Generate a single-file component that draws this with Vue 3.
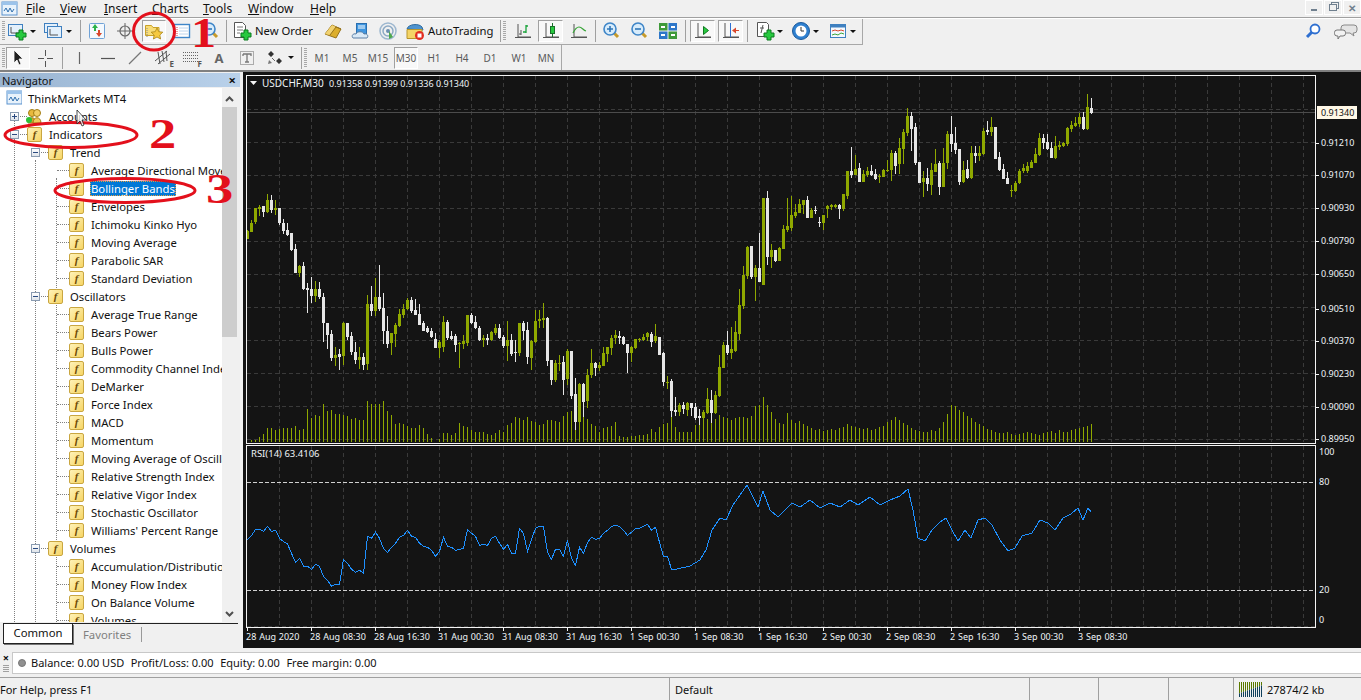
<template>
  <div class="app">
    <!-- menu bar -->
    <div class="menubar">
      <svg class="app-icon" width="18" height="16" viewBox="0 0 18 16" v-html="icons.mt4"></svg>
      <span v-for="m in menus" :key="m.t" class="menu-item" :style="{ width: m.w + 'px' }"><u>{{ m.t[0] }}</u>{{ m.t.slice(1) }}</span>
      <div class="win-btns">
        <span class="win-btn"><i class="w-min"></i></span>
        <span class="win-btn"><i class="w-rest"></i></span>
        <span class="win-btn w-close">✕</span>
      </div>
    </div>

    <!-- toolbars -->
    <div class="toolrow">
      <div class="bar">
        <template v-for="(it, i) in tools1" :key="i">
          <span v-if="it.t === 'sp'" :style="{ width: it.w + 'px' }"></span>
          <span v-else-if="it.t === 'sep'" class="sep"></span>
          <span v-else-if="it.t === 'grip'" class="grip"></span>
          <span v-else-if="it.t === 'caret'" class="caret"></span>
          <span v-else class="btn" :class="{ on: it.on, wide: it.label }" :style="{ width: it.w + 'px' }">
            <svg width="20" height="20" viewBox="0 0 20 20" v-html="icons[it.i]"></svg>
            <span v-if="it.label" class="btn-label">{{ it.label }}</span>
          </span>
        </template>
      </div>
      <div class="right-icons">
        <svg width="16" height="18" viewBox="0 0 16 18" v-html="icons.search"></svg>
        <svg width="24" height="18" viewBox="0 0 24 18" v-html="icons.chat"></svg>
      </div>
    </div>
    <div class="toolrow second">
      <div class="bar">
        <template v-for="(it, i) in tools2" :key="i">
          <span v-if="it.t === 'sp'" :style="{ width: it.w + 'px' }"></span>
          <span v-else-if="it.t === 'sep'" class="sep"></span>
          <span v-else-if="it.t === 'grip'" class="grip"></span>
          <span v-else-if="it.t === 'caret'" class="caret"></span>
          <span v-else-if="it.t === 'tf'" class="btn tf" :class="{ on: it.on }">{{ it.label }}</span>
          <span v-else-if="it.t === 'txt'" class="btn letter">{{ it.label }}</span>
          <span v-else class="btn" :class="{ on: it.on }" :style="{ width: it.w + 'px' }">
            <svg width="20" height="20" viewBox="0 0 20 20" v-html="icons[it.i]"></svg>
            <span v-if="it.mark" class="btn-mark">{{ it.mark }}</span>
          </span>
        </template>
      </div>
    </div>

    <div class="work">
      <!-- navigator -->
      <div class="nav">
        <div class="nav-title"><span>Navigator</span><b>×</b></div>
        <div class="tree-box">
          <div class="tree">
            <i class="vline v1"></i><i class="vline v2"></i><i class="vline v3"></i>
            <div v-for="(r, i) in rows" :key="i" class="row" :class="'lv' + r.lv">
              <i v-if="r.lv" class="stub"></i>
              <i v-if="r.exp" class="exp" :class="r.exp"></i>
              <svg v-if="r.icon" class="ticon" width="16" height="16" viewBox="0 0 16 16" v-html="icons[r.icon]"></svg>
              <span v-else class="ficon">f</span>
              <span class="lbl" :class="{ sel: r.sel }">{{ r.label }}</span>
            </div>
          </div>
          <div class="scroll">
            <svg width="15" height="16" viewBox="0 0 15 16"><path d="M4 10l3.500-3.500L11 10" fill="none" stroke="#505050" stroke-width="2"/></svg>
            <div class="thumb"></div>
            <svg class="down" width="15" height="16" viewBox="0 0 15 16"><path d="M4 6l3.500 3.500L11 6" fill="none" stroke="#505050" stroke-width="2"/></svg>
          </div>
        </div>
        <div class="tabs">
          <span class="tab active">Common</span>
          <span class="tab">Favorites</span>
        </div>
      </div>

      <!-- chart -->
      <svg class="chart" width="1118" height="576" viewBox="243 72 1118 576">
        <g stroke="#3a3a3a" stroke-dasharray="4 3" shape-rendering="crispEdges">
          <line v-for="x in gridX" :key="'a' + x" :x1="x + 0.5" y1="76" :x2="x + 0.5" y2="442" />
          <line v-for="x in gridX" :key="'b' + x" :x1="x + 0.5" y1="446" :x2="x + 0.5" y2="626" />
          <line v-for="y in gridY" :key="'c' + y" x1="247" :y1="y + 0.5" x2="1315" :y2="y + 0.5" />
          <line x1="247" y1="626.5" x2="1315" y2="626.5" />
        </g>
        <line x1="247" y1="112.5" x2="1315" y2="112.5" stroke="#4c4c4c" shape-rendering="crispEdges" />
        <g shape-rendering="crispEdges">
          <rect v-for="v in volumes" :key="'v' + v.x" :x="v.x" :y="442 - v.h" width="1" :height="v.h" fill="#8fa800" />
          <g v-for="c in candles" :key="c.x" :fill="c.up ? '#8fa800' : '#e6e6e6'">
            <rect :x="c.x" :y="c.wt" width="1" :height="c.wb - c.wt" />
            <rect :x="c.x - 1" :y="c.bt" width="3" :height="Math.max(c.bb - c.bt, 1)" />
          </g>
        </g>
        <g stroke="#d0d0d0" stroke-dasharray="4 2" shape-rendering="crispEdges">
          <line x1="247" y1="482.5" x2="1315" y2="482.5" />
          <line x1="247" y1="590.5" x2="1315" y2="590.5" />
        </g>
        <polyline :points="rsiPoints" fill="none" stroke="#1e90ff" stroke-width="1" shape-rendering="crispEdges" />
        <!-- frames -->
        <g fill="none" stroke="#f4f4f4" shape-rendering="crispEdges">
          <path d="M246.500 75.500H1315.500V443.500H246.500Z" />
          <path d="M246.500 445.500H1315.500V627.500H246.500Z" />
        </g>
        <g stroke="#f4f4f4" shape-rendering="crispEdges">
          <line v-for="p in prices" :key="'t' + p.t" x1="1315" :y1="p.y + 0.5" x2="1319" :y2="p.y + 0.5" />
          <line v-for="t in times" :key="'u' + t.x" :x1="t.x + 1.5" y1="627" :x2="t.x + 1.5" y2="631" />
        </g>
        <polygon points="250,81 257,81 253.500,85" fill="#f4f4f4" />
        <text class="ctext title" x="262" y="87">USDCHF,M30</text>
        <text class="ctext" x="329" y="87">0.91358 0.91399 0.91336 0.91340</text>
        <text class="ctext rsi" x="251" y="457">RSI(14) 63.4106</text>
        <text v-for="p in prices" :key="p.t" class="ctext" x="1321" :y="p.y + 3">{{ p.t }}</text>
        <rect x="1317" y="106" width="40" height="13" fill="#fff8e7" />
        <text class="ctext dark" x="1321" y="116">0.91340</text>
        <text v-for="l in rsiLabels" :key="l.t" class="ctext" x="1319" :y="l.y + 3">{{ l.t }}</text>
        <text v-for="t in times" :key="t.t" class="ctext tm" :x="t.x" y="640">{{ t.t }}</text>
      </svg>
    </div>

    <!-- account line -->
    <div class="account">
      <div class="acc-side"><b>×</b><i></i></div>
      <div class="acc-box">
        <i class="dot"></i>
        <span>Balance: 0.00 USD</span><span>Profit/Loss: 0.00</span><span>Equity: 0.00</span><span>Free margin: 0.00</span>
      </div>
    </div>

    <!-- status bar -->
    <div class="status">
      <span class="st help">For Help, press F1</span>
      <span class="st def">Default</span>
      <span class="st s1"></span>
      <span class="st s2"></span>
      <span class="st s3"></span>
      <span class="st conn">
        <svg width="24" height="15" viewBox="0 0 24 15">
          <g v-for="n in 12" :key="n">
            <rect :x="(n - 1) * 2" y="0" width="1" :height="15 - n * 0.7 - 3" fill="#5b7a00" />
            <rect :x="(n - 1) * 2" :y="15 - n * 0.7 - 3" width="1" :height="n * 0.7 + 3" fill="#10405c" />
          </g>
        </svg>
        27874/2 kb
      </span>
    </div>

    <!-- red marks drawn on top of the screenshot -->
    <svg class="marks" width="1361" height="700" viewBox="0 0 1361 700">
      <g fill="none" stroke="#e3101c" stroke-width="3">
        <ellipse cx="154" cy="31.500" rx="20.500" ry="18.500" />
        <ellipse cx="71" cy="135" rx="66" ry="12.500" />
        <ellipse cx="125" cy="190.500" rx="70" ry="12" />
      </g>
      <g class="num">
        <text transform="translate(191 47) scale(1.2 1)">1</text>
        <text transform="translate(149 148) scale(1.3 1)">2</text>
        <text transform="translate(206 203) scale(1.3 1)">3</text>
      </g>
      <path d="M77 110v14l3-3 2 5 2-1-2-5h4z" fill="#fff" fill-opacity=".75" stroke="#222" stroke-width=".8" />
    </svg>
  </div>
</template>

<script setup>
const menus = [
  { t: 'File', w: 34 }, { t: 'View', w: 44 }, { t: 'Insert', w: 48 }, { t: 'Charts', w: 51 },
  { t: 'Tools', w: 45 }, { t: 'Window', w: 62 }, { t: 'Help', w: 40 }
]

const plus = (x, y) => `<path d="M${x + 3} ${y}h4v3h3v4h-3v3h-4v-3h-3v-4h3z" fill="#27c93f" stroke="#0b7a1e" stroke-width="1"/>`
const axes = (x, y, w, h) => `<path d="M${x} ${y}v${h}h${w}" fill="none" stroke="#555" stroke-width="1"/>`
const lens = (sign) => `<path d="M11 11l5 5" stroke="#c69a2a" stroke-width="3"/><circle cx="8" cy="8" r="6" fill="#d8ecfb" stroke="#3f86c8" stroke-width="1.6"/><path d="M5 8h6${sign ? 'M8 5v6' : ''}" stroke="#2f76b8" stroke-width="1.6"/>`

const icons = {
  mt4: '<rect x="1" y="1" width="15" height="13" fill="#e8f2fb" stroke="#5b93cf"/><rect x="1" y="1" width="15" height="3" fill="#9cc3ea"/><path d="M3 10l2-3 2 4 2-4 2 4 2-3" fill="none" stroke="#2f6fae"/>',
  newchart: `<rect x="1.5" y="3.5" width="14" height="11" fill="#e4f0fb" stroke="#3f80c0"/>${axes(4, 6, 8, 6)}${plus(9, 9)}`,
  profile: `<rect x="1.5" y="2.5" width="13" height="9" fill="#e4f0fb" stroke="#3f80c0"/><rect x="4.5" y="5.5" width="14" height="11" fill="#e4f0fb" stroke="#3f80c0"/>${axes(7, 8, 8, 6)}`,
  market: '<rect x="2.5" y="2.5" width="15" height="15" rx="1" fill="#f4f9fe" stroke="#70a2d6"/><path d="M8 3l3 4H9v3H7V7H5z" fill="#2bb34a"/><path d="M12 16l-3-4h2V9h2v3h2z" fill="#d9472b"/>',
  cross: '<circle cx="10" cy="10" r="5" fill="none" stroke="#666" stroke-width="1.2"/><path d="M10 2v16M2 10h16" stroke="#666"/>',
  plusgap: '<path d="M10.500 2v6M10.500 13v6M3 10.500h6M12 10.500h6" stroke="#555"/>',
  folderstar: '<path d="M1.5 4.5h6l1.5 2h6v8h-13.500z" fill="#f8dd78" stroke="#c9a227"/><path d="M13 7l1.800 3.700 4 .5-3 2.800.8 4-3.600-2-3.600 2 .8-4-3-2.800 4-.5z" fill="#f6c93f" stroke="#a98414" stroke-width=".8"/><path d="M3 7v9" stroke="#888" stroke-dasharray="1 1"/>',
  terminal: '<rect x="2.500" y="3.500" width="15" height="13" fill="#fff" stroke="#3f86c8" stroke-width="1.400"/><path d="M5 6v9" stroke="#d83a3a" stroke-dasharray="1 1"/><path d="M7 7h9M7 10h9M7 13h9" stroke="#bcd4ec"/>',
  tester: lens(false),
  neworder: `<path d="M2.500 1.500h8l3 3v12h-11z" fill="#fff" stroke="#555"/><path d="M5 6h6M5 9h6M5 12h3" stroke="#777"/>${plus(9, 9)}`,
  gold: '<path d="M2 13l7-9 9 4-5 9z" fill="#dcae2c" stroke="#96721a"/><path d="M2 13l7-9 4 2-6 8z" fill="#f1d271"/><path d="M7 14l6-8 5 2" fill="none" stroke="#96721a"/>',
  cloud: '<rect x="6.500" y="2.500" width="10" height="10" fill="#3f96e0" stroke="#2a6fb0"/><path d="M8 5h7M8 7h7" stroke="#fff"/><path d="M3 17c-2-2 0-5 3-4 1-3 7-3 8 0 3-1 5 2 3 4z" fill="#d9e9f7" stroke="#5a7fa5"/>',
  signal: '<circle cx="10" cy="10" r="8" fill="none" stroke="#9db7cf" stroke-width="1.500"/><circle cx="10" cy="10" r="5" fill="none" stroke="#8ba9c4" stroke-width="1.500"/><circle cx="10" cy="10" r="2" fill="#6c8fb0"/><path d="M11 10v8l4-2z" fill="#4da84d"/>',
  auto: '<path d="M2 8c1-5 12-6 15-2l1 3z" fill="#4e93cf" stroke="#2f6b9e"/><path d="M2 8.500h15v9h-15z" fill="#f4d466" stroke="#b8952a"/><circle cx="14.500" cy="14.500" r="4.500" fill="#e22b1f"/><rect x="12.500" y="12.500" width="4" height="4" fill="#fff"/>',
  bar: `${axes(5, 3, 13, 13)}<path d="M2 16.500h16M8 9v5M8 13h-2" stroke="#555"/><path d="M13 4v8M13 5h2M13 11h-3" stroke="#19a33a" stroke-width="1.300" fill="none"/>`,
  candle: `${axes(5, 2, 13, 14)}<path d="M2 16.500h16" stroke="#555"/><rect x="9.500" y="5.500" width="4" height="7" fill="#27c93f" stroke="#1a6f2a"/><path d="M11.500 2v3M11.500 13v3" stroke="#1a6f2a"/>`,
  line: `${axes(5, 3, 13, 13)}<path d="M2 16.500h16" stroke="#555"/><path d="M4 12c2-4 4-6 6-6 3 0 4 3 7 4" fill="none" stroke="#3aa53a" stroke-width="1.200"/>`,
  zoomin: lens(true),
  zoomout: lens(false),
  tile: '<rect x="1" y="2" width="8.500" height="7.500" fill="#3f9a3a"/><rect x="10.500" y="2" width="8.500" height="7.500" fill="#2e77c9"/><rect x="1" y="10.500" width="8.500" height="7.500" fill="#2e77c9"/><rect x="10.500" y="10.500" width="8.500" height="7.500" fill="#3f9a3a"/><path d="M3 6h4M13 6h4M3 14h4M13 14h4" stroke="#fff" stroke-width="2"/>',
  autoscroll: `${axes(5, 2, 13, 14)}<path d="M2 16.500h16" stroke="#555"/><path d="M10.500 5.500l5 4-5 4z" fill="#27c93f" stroke="#107a20"/>`,
  shift: `${axes(4, 2, 14, 14)}<path d="M2 16.500h16" stroke="#555"/><path d="M9.500 2v14" stroke="#2f6fd0"/><path d="M11 9.500l4-3v6z" fill="#d9472b"/><path d="M13 9.500h5" stroke="#d9472b"/>`,
  indicators: `<path d="M2.500 1.500h9l2 2v12h-11z" fill="#fff" stroke="#555"/><path d="M6 12l2-8M5 7h4" stroke="#555"/>${plus(9, 9)}`,
  clock: '<circle cx="10" cy="10" r="8.500" fill="#2f80d0" stroke="#1d5a9b"/><circle cx="10" cy="10" r="5.500" fill="#fff"/><path d="M10 6v4h3" fill="none" stroke="#333"/>',
  template: '<rect x="2.500" y="3.500" width="15" height="13" fill="#f4f9fe" stroke="#3f80c0"/><rect x="2.500" y="3.500" width="15" height="3" fill="#3f80c0"/><path d="M4 10l3-1 3 1 3-1 3 1" fill="none" stroke="#d9472b"/><path d="M4 14l3-1 3 1 3-2 3 1" fill="none" stroke="#3aa53a"/>',
  search: '<path d="M7 10l-5 5" stroke="#2e6fd0" stroke-width="3"/><circle cx="10" cy="7" r="4.500" fill="#fff" stroke="#2e6fd0" stroke-width="1.800"/>',
  chat: '<path d="M10 3h10a3 3 0 0 1 3 3v2a3 3 0 0 1-3 3h-1l1 3-4-3h-6a3 3 0 0 1-3-3V6a3 3 0 0 1 3-3z" fill="#e4e4e4" stroke="#888"/><path d="M3 8h6a2.500 2.500 0 0 1 2.500 2.500v1a2.500 2.500 0 0 1-2.500 2.500H6l-2 3v-3H3A2.500 2.500 0 0 1 .5 11.500v-1A2.500 2.500 0 0 1 3 8z" fill="#f2f2f2" stroke="#777"/>',
  pointer: '<path d="M6 2v13l3-3 2 5 2-1-2-5h4z" fill="#222" stroke="#fff" stroke-width=".8"/>',
  vl: '<path d="M10.500 4v12" stroke="#666" stroke-width="1.200"/>',
  hl: '<path d="M3 10.500h14" stroke="#555" stroke-width="1.200"/>',
  tl: '<path d="M4 16L16 4" stroke="#777" stroke-width="1.200"/>',
  channel: '<path d="M2 13L14 3M5 16L17 6M5 4l2 12M9 3l2 11M13 3l1 10" stroke="#555" fill="none"/>',
  fib: '<path d="M2 4.500h15M2 7.500h15M2 10.500h15M2 13.500h15" stroke="#666" stroke-dasharray="1 1"/>',
  textbox: '<rect x="3.500" y="3.500" width="13" height="13" fill="none" stroke="#666" stroke-dasharray="1 1"/><path d="M6 6h8v2M10 6v8M8 14h4M6 8V6" stroke="#777" stroke-width="1.300" fill="none"/>',
  arrows: '<path d="M6 3l3 3-3 3-3-3zM14 10l3 3-3 3-3-3z" fill="#333"/><path d="M7 10l3 3" stroke="#666"/><path d="M4 12l3 3-4 1z" fill="#777"/>',
  acct: '<circle cx="6" cy="5" r="3.500" fill="#e8b93c" stroke="#a27d14"/><circle cx="11" cy="5" r="3.500" fill="#f2cf66" stroke="#a27d14"/><path d="M2 15c0-7 8-7 8 0z" fill="#d8a62e" stroke="#a27d14"/><path d="M7 15c0-7 8-7 8 0z" fill="#efc95c" stroke="#a27d14"/><circle cx="3" cy="12" r="3" fill="#2bc038"/>'
}

const sp = (w) => ({ t: 'sp', w })
const sep = { t: 'sep' }
const grip = { t: 'grip' }
const caret = { t: 'caret' }
const b = (i, w = 22, on = false) => ({ t: 'btn', i, w, on })

const tools1 = [
  grip, b('newchart'), caret, sp(4), b('profile'), caret, sp(6), sep, sp(5),
  b('market'), sp(6), b('cross'), sp(6), b('folderstar', 24, true), sp(5), b('terminal'), sp(7), b('tester'), sp(4), sep, sp(5),
  { t: 'btn', i: 'neworder', w: 83, label: 'New Order' }, sp(7), b('gold'), sp(5), b('cloud'), sp(6), b('signal'), sp(6),
  { t: 'btn', i: 'auto', w: 95, label: 'AutoTrading' }, sep, grip, sp(5),
  b('bar'), sp(4), b('candle', 25, true), sp(5), b('line'), sp(5), sep, sp(5), b('zoomin'), sp(6), b('zoomout'), sp(6), b('tile'), sp(6), sep, sp(4),
  b('autoscroll', 25, true), sp(3), b('shift', 25, true), sp(4), sep, sp(7), b('indicators', 20), caret, sp(6), b('clock', 20), caret, sp(7), b('template', 20), caret, sp(4)
]

const tf = (label, on = false) => ({ t: 'tf', label, on })
const tools2 = [
  grip, b('pointer', 24, true), sp(4), b('plusgap'), sp(6), sep, sp(5), b('vl'), sp(7), b('hl'), sp(5), b('tl'), sp(6),
  { t: 'btn', i: 'channel', w: 22, mark: 'E' }, sp(6), { t: 'btn', i: 'fib', w: 22, mark: 'F' }, sp(6),
  { t: 'txt', label: 'A' }, sp(6), b('textbox'), sp(6), b('arrows'), caret, sp(5), sep, grip, sp(2),
  tf('M1'), sp(4), tf('M5'), sp(4), tf('M15'), sp(4), tf('M30', true), sp(4), tf('H1'), sp(4), tf('H4'), sp(4), tf('D1'), sp(5), tf('W1'), sp(3), tf('MN'), sp(3)
]

const child = (label, sel) => ({ label, lv: 3, sel })
const rows = [
  { label: 'ThinkMarkets MT4', lv: 0, icon: 'mt4' },
  { label: 'Accounts', lv: 1, exp: 'closed', icon: 'acct' },
  { label: 'Indicators', lv: 1, exp: 'open' },
  { label: 'Trend', lv: 2, exp: 'open' },
  child('Average Directional Movement Index'), child('Bollinger Bands', true), child('Envelopes'), child('Ichimoku Kinko Hyo'),
  child('Moving Average'), child('Parabolic SAR'), child('Standard Deviation'),
  { label: 'Oscillators', lv: 2, exp: 'open' },
  child('Average True Range'), child('Bears Power'), child('Bulls Power'), child('Commodity Channel Index'), child('DeMarker'),
  child('Force Index'), child('MACD'), child('Momentum'), child('Moving Average of Oscillator'), child('Relative Strength Index'),
  child('Relative Vigor Index'), child('Stochastic Oscillator'), child("Williams' Percent Range"),
  { label: 'Volumes', lv: 2, exp: 'open' },
  child('Accumulation/Distribution'), child('Money Flow Index'), child('On Balance Volume'), child('Volumes')
]

// candles read off the picture: colour, body top, body bottom, wick top, wick bottom (in 3x pixels)
const seg1 = 'g122 147 120 147,g99 125 90 127,g54 97 54 102,g50 56 45 78,w48 66 48 81,g30 66 12 68,w30 60 15 68,g54 60 30 75,w54 99 54 104,w99 122 88 132,w120 135 100 137,w129 180 129 183,w177 248 163 248,g228 248 225 261,w228 297 217 300,w294 300 279 369,w297 318 262 340,g297 318 274 335,w297 321 277 327,w321 399 309 456,w399 435 399 477,w432 504 420 513,g495 504 472 528,w492 501 477 540,g399 498 396 525,w399 441 399 450,w438 486 427 495,w486 510 456 522,g501 510 472 538,w501 525 490 540,g342 522 315 540,w342 363 288 378,g321 363 264 378,w321 357 225 363,w354 423 309 462,w423 462 378 474,g429 459 429 495,g405 432 399 471,g372 408 358 411,g357 375 342 384,g330 357 324 360,w330 363 321 369,w360 375 327 375,w372 405 342 405,w399 423 393 423,w414 426 408 429,w423 441 414 444,w447 474 429 474,g456 474 450 504,g396 471 378 486,w396 444 390 450,w438 447 423 450,w438 465 432 486,g459 462 456 534,g453 462 435 477,g375 459 375 468,w375 399 369 402,w396 414 378 417,w414 450 408 453,g444 450 435 471,w444 450 432 465,g426 450 423 453,g414 429 402 435,w414 444 402 447,w441 468 435 474,g450 468 393 513,w450 492 432 498,w486 489 450 516,g399 489 399 498,w399 423 393 450,w420 501 396 522,g453 504 450 540,g393 456 360 459,g387 393 360 414,g384 390 339 414'
const seg2 = 'w414 543 411 558,w540 600 540 615,g549 600 540 606,g549 552 525 573,w546 600 528 645,g513 597 507 615,w513 648 513 657,w642 726 594 750,g612 726 609 750,w612 666 609 711,g585 663 567 684,g549 585 507 594,w549 564 546 588,g555 564 546 573,g519 558 501 558,g501 522 501 546,g474 504 465 525,g465 474 450 492,w468 474 453 492,w471 492 468 495,w492 519 492 579,g501 519 498 546,g477 504 477 507,g477 480 474 486,g471 480 462 483,g459 471 456 483,w462 486 456 501,g468 483 432 489,w471 525 471 525,w519 606 516 618,g606 609 588 627,w603 693 597 711,w690 696 651 708,g675 696 669 708,w675 687 666 702,g669 690 666 708,w669 684 669 708,w681 714 669 720,w708 714 687 735,g696 714 690 750,g657 699 624 702,w660 699 630 729,g645 699 633 702,g561 648 525 651,g495 564 486 564,w495 519 453 525,g507 519 441 537,g456 513 423 516,g375 462 327 480,g285 378 258 387,g201 288 198 297,w198 291 198 297,g264 291 255 363,w264 306 159 306,g54 315 54 315,w54 231 33 255,g210 231 192 264,w210 243 210 246,g204 243 201 243,g147 207 135 207,g138 150 54 156,g105 144 48 153,g96 108 72 114,g72 99 57 99,g60 75 60 102,w60 114 48 114,g90 114 84 114,w90 93 78 102,w126 129 111 141,g105 129 105 150,g78 87 75 114,g75 81 72 90,g75 81 72 84,w75 87 72 117,g42 87 42 93'
const seg3 = 'g243 318 243 327,w243 255 171 264,g237 255 195 255,w234 276 219 276,g252 276 240 276,g243 255 231 261,w243 255 225 258,w252 267 237 270,g258 261 252 279,g240 261 237 261,g240 243 209 246,g189 240 180 273,w189 228 183 252,g174 222 144 252,g126 177 117 222,g78 129 54 138,w78 117 66 183,w111 219 99 225,w216 279 216 279,g264 276 243 321,w264 282 234 303,g240 285 219 315,g222 246 177 246,w219 291 213 315,g219 291 174 291,g132 219 123 237,w132 162 78 186,w159 180 111 192,w177 276 177 285,g240 276 213 279,w237 264 210 267,g189 264 168 267,w189 198 168 219,g189 198 168 213,g123 192 114 195,w120 126 93 135,g111 126 81 138,w111 207 111 207,w201 240 186 243,w237 267 222 267,w264 282 246 282,g300 303 285 321,g279 303 273 306,g243 279 237 282,g234 243 222 249,g228 243 216 249,g216 234 210 234,g192 219 174 219,g144 195 129 198,w144 159 132 177,w156 177 132 180,w174 204 156 204,g168 204 138 207,g165 171 153 180,g159 168 156 171,g114 162 111 168,g105 117 93 126,g99 108 81 111,g81 102 69 111,w81 117 66 120,g51 117 12 120,w54 69 24 72'

const candles = []
const readSeg = (str, base) => {
  str.split(',').forEach((s) => {
    const [bt, bb, wt, wb] = s.slice(1).split(' ').map((n) => base + Math.round(Number(n) / 3))
    candles.push({ x: 247 + candles.length * 4, up: s[0] === 'g', bt, bb, wt, wb })
  })
}
readSeg(seg1, 190)
readSeg(seg2, 180)
readSeg(seg3, 90)

const volTops = [186, 181, 180, 171, 162, 144, 144, 150, 147, 144, 144, 144, 138, 150, 147, 87, 114, 105, 108, 72, 93, 90, 102, 102, 105, 108, 117, 114, 120, 120, 63, 72, 72, 72, 63, 93, 105, 132, 129, 132, 138, 144, 144, 135, 144, 162, 174, 186, 177, 159, 159, 165, 159, 129, 138, 141, 150, 156, 156, 156, 162, 165, 159, 150, 156, 135, 129, 111, 114, 120, 111, 123, 126, 135, 132]
const volRest = [22, 22, 21, 20, 26, 30, 31, 28, 25, 25, 23, 18, 16, 10, 14, 15, 16, 20, 6, 5, 5, 6, 6, 7, 7, 8, 13, 10, 15, 18, 19, 25, 15, 10, 10, 10, 10, 17, 17, 22, 23, 24, 23, 27, 25, 24, 22, 24, 25, 25, 24, 26, 36, 37, 45, 37, 30, 23, 19, 18, 29, 22, 19, 21, 18,
  16, 14, 12, 13, 11, 12, 13, 12, 14, 15, 18, 16, 15, 14, 13, 14, 12, 13, 15, 16, 20, 22, 25, 22, 19, 17, 14, 12, 11, 10, 10, 12, 11, 14, 20, 28, 37, 36, 32, 30, 26, 24, 20, 18, 16, 13, 12, 10, 9, 9, 10, 8, 7, 8, 9, 10, 9, 8, 7, 9, 10, 11, 9, 12, 10, 10, 12, 13, 14, 15, 16, 18, 20, 21, 22]
const volumes = [...volTops.map((t) => Math.round((186 - t) / 3)), ...volRest].slice(0, 212).map((h, i) => ({ x: 247 + i * 4, h }))

// RSI: first part per bar (3x pixels), then the rest as a hand-read polyline
const rsiA = [209, 197, 178, 178, 184, 169, 184, 181, 205, 215, 222, 250, 277, 265, 289, 289, 298, 283, 289, 319, 331, 349, 343, 343, 268, 280, 298, 307, 301, 310, 199, 205, 187, 205, 235, 247, 232, 220, 202, 196, 181, 199, 202, 220, 229, 232, 241, 259, 244, 202, 229, 232, 241, 238, 235, 178, 190, 199, 226, 223, 226, 205, 199, 220, 238, 223, 250, 250, 175, 190, 244, 208, 175, 169, 169, 247, 268, 238, 238, 259, 211, 265, 286, 232, 250, 217, 202, 208, 205, 190, 181, 169, 166, 169, 181, 196, 187, 175, 175, 169, 163, 181, 172, 217, 259, 259, 298, 298]
const rsiB = '690,566 700,560 706,550 712,530 720,518 726,520 733,505 740,495 747,485 752,495 758,507 763,491 770,510 778,517 785,510 792,503 800,507 810,500 820,508 830,503 840,507 850,500 858,505 870,497 880,505 890,500 900,496 908,489 913,510 918,538 925,541 932,530 940,522 946,518 952,530 958,541 965,530 971,538 978,520 985,518 992,525 1000,540 1008,551 1015,548 1022,536 1032,533 1040,520 1048,523 1055,530 1063,518 1071,514 1078,508 1083,520 1088,508 1091,512'
const rsiPoints = rsiA.map((v, i) => `${247.5 + i * 4},${470 + v / 3}`).join(' ') + ' ' + rsiB

const gridX = Array.from({ length: 33 }, (_, i) => 279 + i * 32)
const gridY = [109, 142, 175, 208, 241, 274, 307, 340, 373, 406, 439]
const prices = [
  { t: '0.91210', y: 143 }, { t: '0.91070', y: 175 }, { t: '0.90930', y: 208 }, { t: '0.90790', y: 241 }, { t: '0.90650', y: 274 },
  { t: '0.90510', y: 309 }, { t: '0.90370', y: 341 }, { t: '0.90230', y: 374 }, { t: '0.90090', y: 407 }, { t: '0.89950', y: 439 }
]
const rsiLabels = [{ t: '100', y: 452 }, { t: '80', y: 482 }, { t: '20', y: 590 }, { t: '0', y: 620 }]
const timeText = ['28 Aug 2020', '28 Aug 08:30', '28 Aug 16:30', '31 Aug 00:30', '31 Aug 08:30', '31 Aug 16:30', '1 Sep 00:30', '1 Sep 08:30', '1 Sep 16:30', '2 Sep 00:30', '2 Sep 08:30', '2 Sep 16:30', '3 Sep 00:30', '3 Sep 08:30']
const times = timeText.map((t, i) => ({ t, x: 246 + i * 64 }))
</script>

<style>
html, body { margin: 0; padding: 0; overflow: hidden; background: #f0f0f0; }
</style>

<style scoped>
.app {
  position: relative;
  width: 1361px;
  height: 700px;
  overflow: hidden;
  display: flex;
  flex-direction: column;
  background: #f0f0f0;
  font-family: "Noto Sans", "Liberation Sans", sans-serif;
  font-size: 11px;
  color: #111;
}

.menubar {
  height: 17px;
  flex: none;
  display: flex;
  align-items: center;
  border-bottom: 1px solid #a0a0a0;
  box-shadow: 0 1px 0 #fff;
  position: relative;
  font-size: 12px;
}
.app-icon { margin: 0 7px 0 1px; }
.menu-item { flex: none; }
.win-btns { margin-left: auto; display: flex; gap: 1px; align-self: flex-start; }
.win-btn {
  width: 18px;
  height: 15px;
  background: #f0f0f0;
  border: 1px solid #fff;
  box-sizing: border-box;
  display: flex;
  align-items: center;
  justify-content: center;
  color: #70808f;
  font-size: 10px;
  font-weight: 700;
}
.w-min { width: 6px; height: 2px; background: #70808f; margin-top: 5px; }
.w-rest { width: 6px; height: 5px; border: 1px solid #70808f; box-shadow: 2px -2px 0 -1px #f0f0f0, 2px -2px 0 0 #70808f; }

.toolrow { height: 27px; flex: none; display: flex; }
.bar {
  display: flex;
  align-items: center;
  height: 26px;
  border-bottom: 1px solid #a8a8a8;
  border-right: 1px solid #a8a8a8;
}
.second { border-bottom: 2px solid #808080; box-sizing: content-box; height: 25px; }
.second .bar { border-bottom: none; height: 25px; }
.right-icons { margin-left: auto; display: flex; align-items: center; height: 26px; gap: 13px; padding-right: 3px; }
.sep { width: 1px; height: 22px; background: #a0a0a0; flex: none; }
.grip {
  width: 6px;
  height: 20px;
  flex: none;
  background: repeating-linear-gradient(#a8a8a8 0 1px, transparent 1px 2px) 2px 0 / 3px 100% no-repeat;
}
.caret { width: 10px; flex: none; display: flex; justify-content: center; }
.caret::after {
  content: "";
  border-left: 3px solid transparent;
  border-right: 3px solid transparent;
  border-top: 3px solid #111;
}
.btn {
  flex: none;
  height: 22px;
  box-sizing: border-box;
  display: flex;
  align-items: center;
  justify-content: center;
  position: relative;
}
.btn.wide { justify-content: flex-start; gap: 3px; }
.btn-label { font-size: 11.3px; white-space: nowrap; margin-top: -2px; }
.btn.on {
  background: #f8f8f8;
  border: 1px solid #fff;
  border-top-color: #a0a0a0;
  border-left-color: #a0a0a0;
}
.btn-mark { position: absolute; right: 0; bottom: 0; font-size: 8px; font-weight: 700; color: #555; }
.tf { width: 24px; font-size: 10px; color: #5a5a5a; }
.letter { width: 22px; font-size: 13px; font-weight: 700; color: #666; }

.work { height: 576px; flex: none; display: flex; }
.nav { width: 243px; flex: none; display: flex; flex-direction: column; }
.nav-title {
  height: 14px;
  margin: 1px 3px 1px 0;
  padding-left: 2px;
  background: linear-gradient(90deg, #99b4d1, #b9d1ea);
  display: flex;
  align-items: center;
  justify-content: space-between;
}
.nav-title b { padding-right: 4px; font-size: 13px; line-height: 12px; }
.tree-box { height: 534px; flex: none; display: flex; margin-right: 6px; background: #fff; }
.tree { position: relative; flex: 1; overflow: hidden; min-width: 0; padding-top: 1px; font-size: 11.3px; }
.vline { position: absolute; top: 27px; bottom: 0; border-left: 1px dotted #808080; }
.v1 { left: 14px; }
.v2 { left: 35px; top: 72px; }
.v3 { left: 56px; top: 90px; }
.row { position: relative; height: 18px; display: flex; align-items: center; white-space: nowrap; }
.lv0 { padding-left: 6px; }
.lv1 { padding-left: 27px; }
.lv2 { padding-left: 48px; }
.lv3 { padding-left: 69px; }
.stub { position: absolute; top: 9px; width: 12px; border-top: 1px dotted #808080; }
.lv1 .stub { left: 15px; }
.lv2 .stub { left: 36px; }
.lv3 .stub { left: 57px; }
.exp {
  position: absolute;
  top: 5px;
  width: 9px;
  height: 9px;
  box-sizing: border-box;
  border: 1px solid #8a9bb0;
  background: linear-gradient(#fff, #dfe4ea);
}
.lv1 .exp { left: 10px; }
.lv2 .exp { left: 31px; }
.exp::before { content: ""; position: absolute; left: 1px; top: 3px; width: 5px; height: 1px; background: #2a4a80; }
.closed::after { content: ""; position: absolute; left: 3px; top: 1px; width: 1px; height: 5px; background: #2a4a80; }
.ticon { flex: none; width: 16px; margin-right: 5px; background: #fff; }
.lv1 .ticon { margin-left: -1px; margin-right: 6px; }
.ficon {
  flex: none;
  width: 15px;
  height: 15px;
  margin-right: 6px;
  box-sizing: border-box;
  border: 1px solid #c9a640;
  border-radius: 2px;
  background: linear-gradient(135deg, #fff2b8, #f6d565);
  font: italic 700 11px/13px "Liberation Serif", serif;
  color: #6e4a06;
  text-align: center;
}
.lbl { padding: 0 1px; line-height: 15px; height: 15px; }
.lbl.sel { background: #0078d7; color: #fff; outline: 1px dotted #e8a040; outline-offset: -1px; }
.scroll { width: 15px; flex: none; background: #f0f0f0; position: relative; display: flex; flex-direction: column; }
.scroll svg { flex: none; margin-top: 3px; }
.thumb { height: 230px; background: #cdcdcd; }
.down { position: absolute; bottom: 0; left: 0; }

.tabs {
  height: 22px;
  margin: 1px 5px 0 3px;
  border-top: 1px solid #222;
  display: flex;
  align-items: flex-start;
}
.tab { height: 20px; line-height: 18px; color: #808080; padding: 0 10px; font-size: 11.3px; }
.tab + .tab { border-right: 1px solid #999; height: 15px; line-height: 15px; margin-top: 3px; }
.tab.active { width: 70px; box-sizing: border-box; text-align: center; background: #fff; color: #111; border: 1px solid #222; border-top: none; padding: 0; box-shadow: 1px 1px 0 #777; }

.chart { flex: none; display: block; background: #141414; }
.ctext { font: 9px "Noto Sans", "Liberation Sans", sans-serif; fill: #f0f4f8; }
.title { font-size: 10px; }
.rsi { font-size: 9.5px; }
.tm { word-spacing: 0.5px; }
.dark { fill: #111; }

.account { height: 30px; flex: none; display: flex; align-items: center; border-bottom: 1px solid #a0a0a0; box-sizing: border-box; }
.acc-side { width: 12px; flex: none; display: flex; flex-direction: column; align-items: center; }
.acc-side b { font-size: 11px; line-height: 10px; }
.acc-side i { width: 6px; height: 8px; background: repeating-linear-gradient(#a0a0a0 0 1px, transparent 1px 2px); margin-top: 2px; }
.acc-box {
  flex: 1;
  height: 22px;
  box-sizing: border-box;
  background: #fff;
  border: 1px solid #c8c8c8;
  border-right: none;
  display: flex;
  align-items: center;
  gap: 6.5px;
  padding-left: 5px;
}
.dot { width: 8px; height: 8px; border-radius: 50%; background: #909090; border: 1px solid #777; margin-right: -1.5px; box-sizing: border-box; }

.status { flex: 1; display: flex; align-items: center; height: 22px; overflow: hidden; }
.st { height: 100%; display: flex; align-items: center; box-sizing: border-box; border-left: 1px solid #a0a0a0; flex: none; padding-left: 5px; }
.help { width: 669px; border-left: none; padding-left: 0; }
.def { width: 360px; }
.s1 { width: 69px; }
.s2 { width: 70px; }
.s3 { width: 65px; }
.conn { flex: 1; gap: 4px; }

.marks { position: absolute; left: 0; top: 0; pointer-events: none; }
.num text { font: 700 42px "Liberation Serif", serif; fill: #e3101c; }
</style>
